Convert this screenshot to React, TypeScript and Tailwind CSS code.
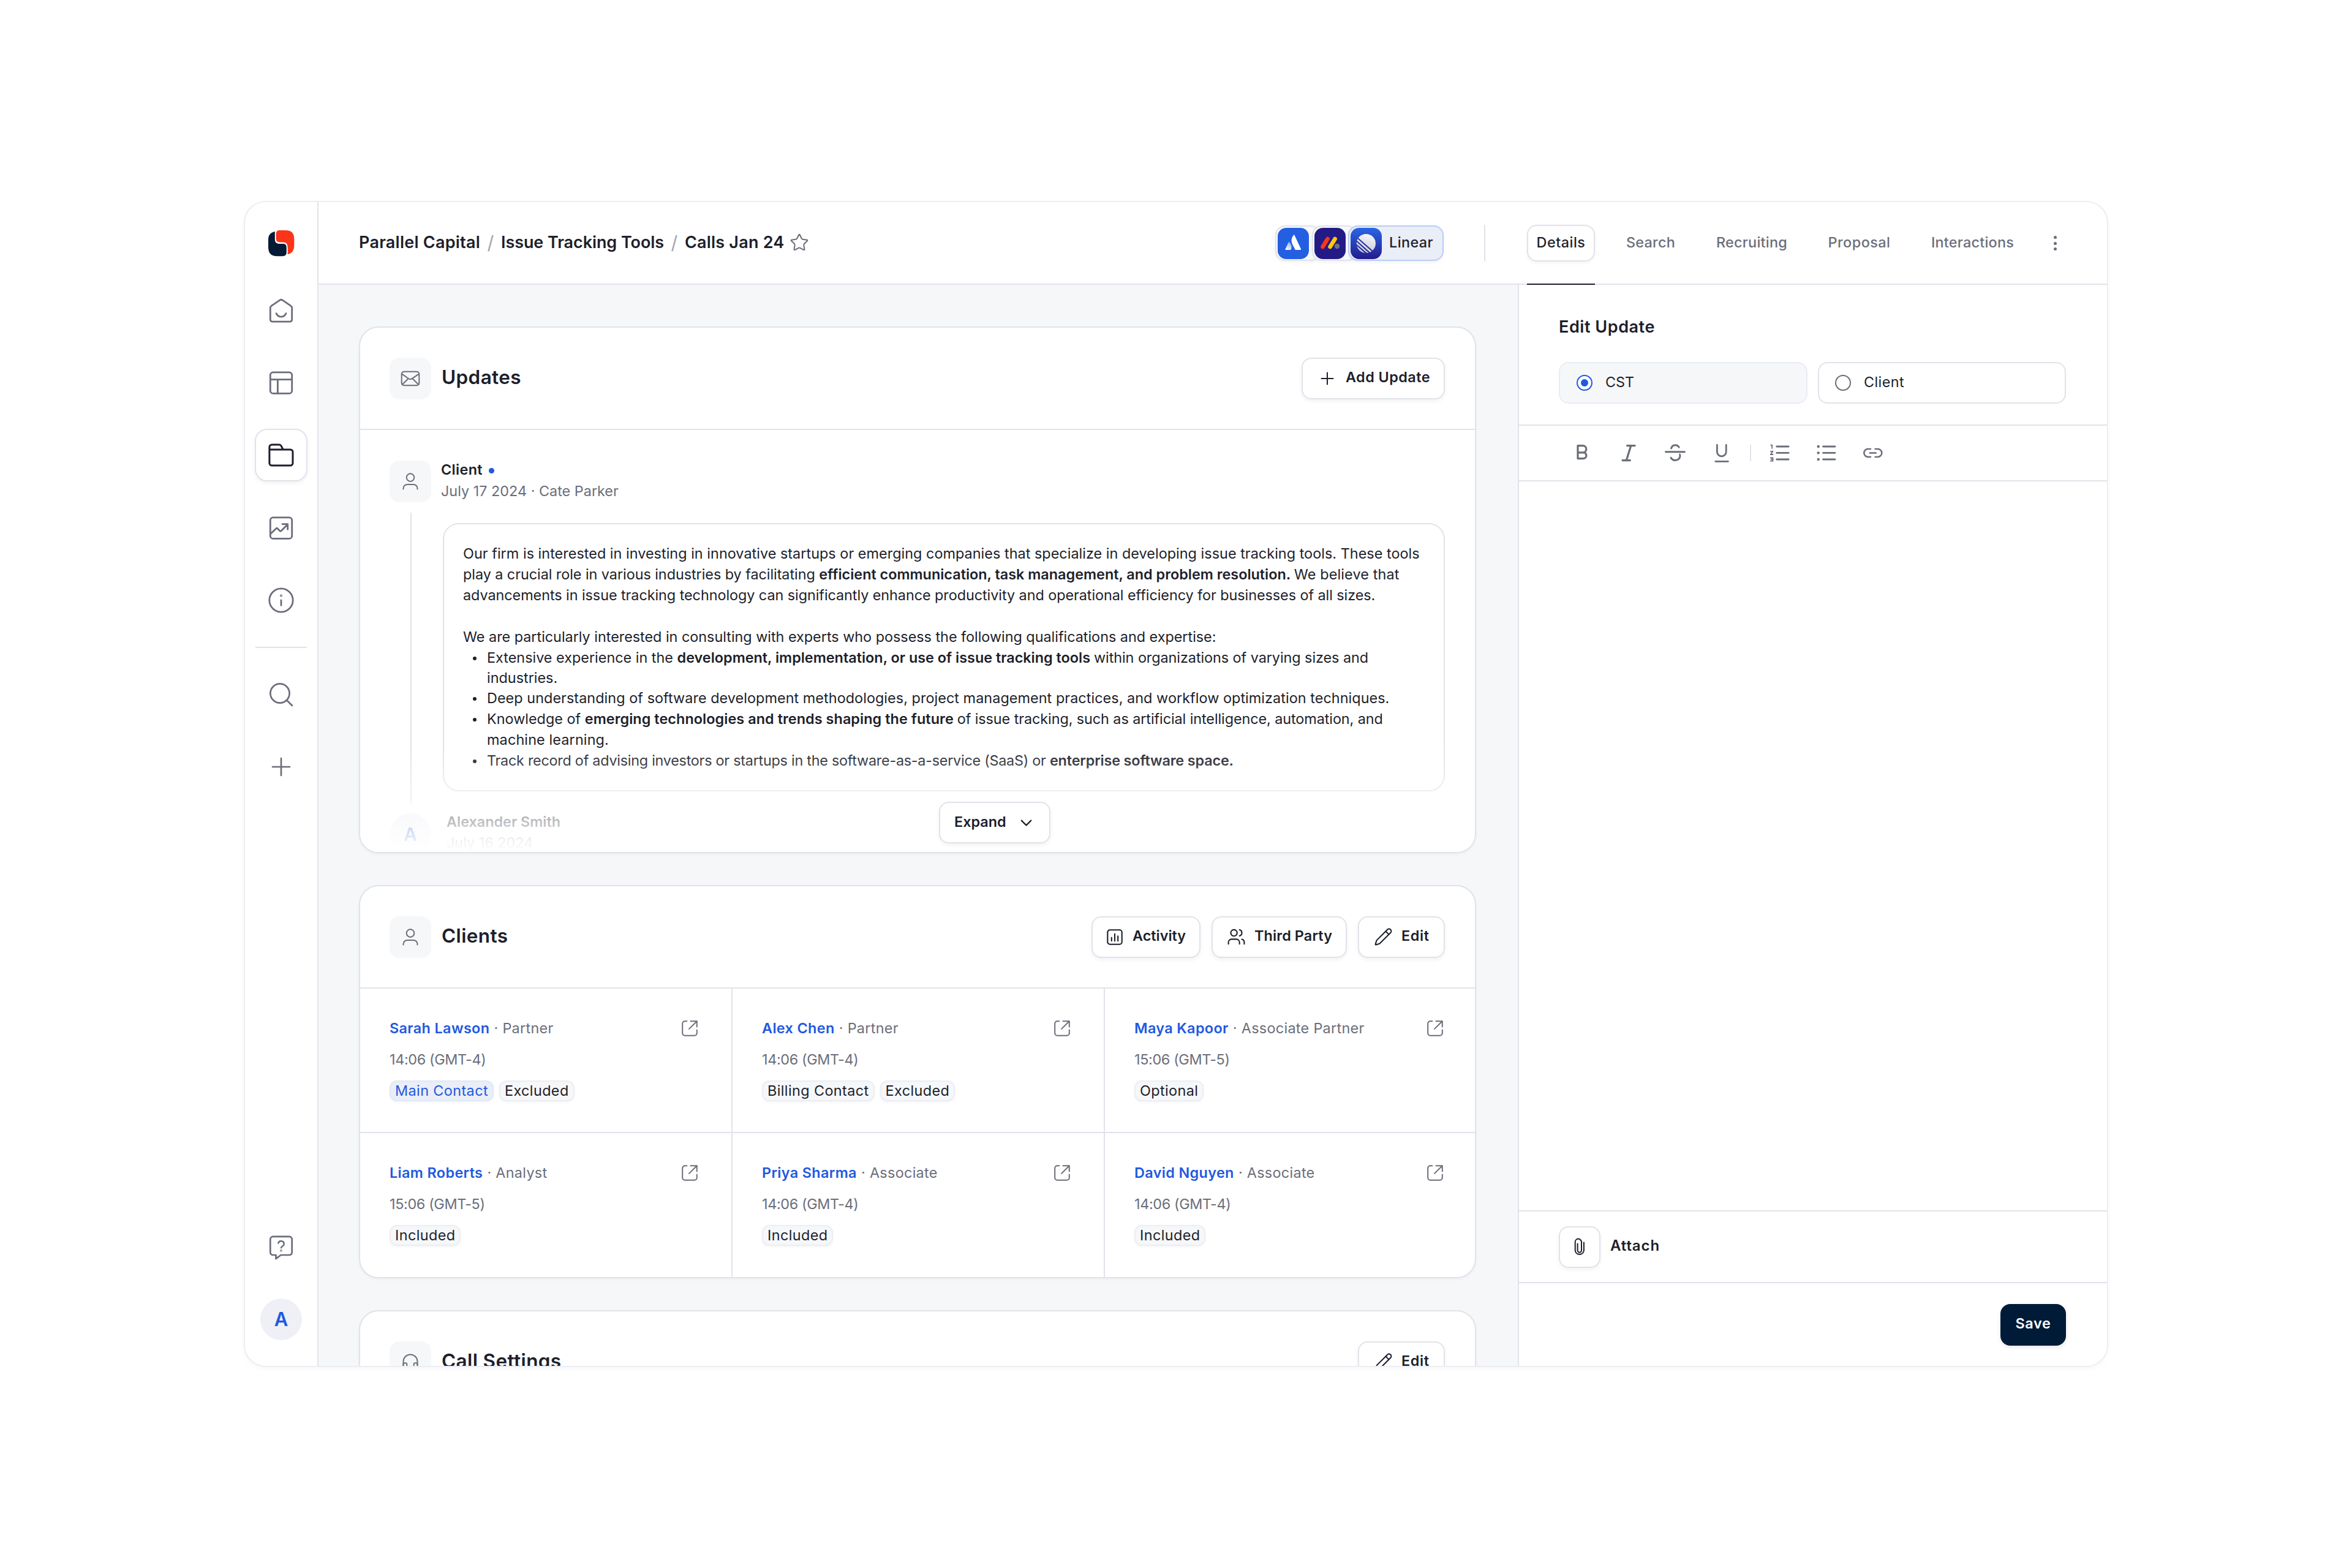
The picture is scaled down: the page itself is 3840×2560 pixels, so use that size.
import React from "react";
import { Pencil, Users, ChevronDown, Star } from "lucide-react";

const semi = "font-semibold text-[#1d1f2b]";
const base = "text-[23.4px]";
const lift = "shadow-[0_3px_6px_rgba(30,34,60,0.06)]";

function T({ className = "", children }: { className?: string; children: React.ReactNode }) {
  return <span className={"whitespace-pre " + className}>{children}</span>;
}

function Icon({ size, sw = 2, className = "", children }: { size: number; sw?: number; className?: string; children: React.ReactNode }) {
  return (
    <svg width={size} height={size} viewBox={`0 0 ${size} ${size}`} fill="none" stroke="currentColor" strokeWidth={sw} strokeLinecap="round" strokeLinejoin="round" className={"shrink-0 " + className}>
      {children}
    </svg>
  );
}

const HomeIcon = () => (
  <Icon size={44} sw={2.8}>
    <path d="M4.3 36.7V17.4c0-1.3.7-2.4 1.8-3L20.4 4.7a3.2 3.2 0 0 1 3.2 0l14.3 9.7c1.1.6 1.8 1.7 1.8 3v19.3a3.5 3.5 0 0 1-3.5 3.5H7.8a3.5 3.5 0 0 1-3.5-3.5z" />
    <path d="M14 26.6c1.7 3.6 4.6 5.6 8 5.6s6.3-2 8-5.6" />
  </Icon>
);
const LayoutIcon = () => (
  <Icon size={44} sw={2.8}>
    <rect x="4.3" y="4.8" width="35.4" height="34.6" rx="4.5" />
    <path d="M4.3 16.6h35.4M16.4 16.6v22.8" />
  </Icon>
);
const FolderIcon = () => (
  <Icon size={44} sw={3}>
    <path d="M2.9 12.9v22.2a4 4 0 0 0 4 4H37a4 4 0 0 0 4-4V16.9a4 4 0 0 0-4-4H2.9V9a4 4 0 0 1 4-4h11.7c1.4 0 2.7.7 3.4 1.9l3.2 6" />
  </Icon>
);
const ChartIcon = () => (
  <Icon size={44} sw={2.8}>
    <rect x="4.3" y="4.8" width="35.4" height="34.6" rx="4.5" />
    <path d="M4.8 31.4l9.2-8.7c.6-.6 1.3-.6 1.9 0l4 4.1c.6.6 1.3.6 1.9.1l10.4-10.5M24 15.7h8.7v8.6" />
  </Icon>
);
const InfoIcon = () => (
  <Icon size={44} sw={2.8}>
    <circle cx="22" cy="22" r="19.2" />
    <path d="M22 22v8.2" />
    <circle cx="22" cy="14.6" r="0.6" />
  </Icon>
);
const SearchIcon = () => (
  <Icon size={44} sw={2.7}>
    <circle cx="20" cy="20" r="15.6" />
    <path d="M31.2 31.2l8.8 8.8" />
  </Icon>
);
const PlusIcon = () => (
  <Icon size={44} sw={2.7}>
    <path d="M22 8v28M8 22h28" />
  </Icon>
);
const HelpIcon = () => (
  <Icon size={44} sw={2.7}>
    <path d="M8.8 3.8h26.4a4.500 4.500 0 0 1 4.500 4.500v21.200a4.500 4.500 0 0 1-4.500 4.500H21.600l-8.100 6.100V34H8.800a4.500 4.500 0 0 1-4.500-4.500V8.300a4.500 4.500 0 0 1 4.500-4.500z" />
    <path d="M17.300 14.600a4.800 4.800 0 0 1 9.400 1.400c0 3.200-4.700 3.900-4.700 6.200" strokeWidth="2.500" />
    <circle cx="22" cy="26.800" r="0.500" />
  </Icon>
);
const MailIcon = () => (
  <Icon size={34} sw={2}>
    <rect x="2.700" y="5.700" width="28.600" height="22.600" rx="4" />
    <path d="M3.200 9.600l11 7.600a5 5 0 0 0 5.600 0l11-7.600M3.800 26.800l9.600-9.600M30.200 26.800l-9.600-9.600" />
  </Icon>
);
const PersonIcon = () => (
  <Icon size={32} sw={2}>
    <circle cx="16" cy="9.600" r="6.300" />
    <path d="M4.500 28.600v-1.200a6.500 6.500 0 0 1 6.500-6.500h10a6.500 6.500 0 0 1 6.500 6.500v1.200" />
  </Icon>
);
const HeadphonesIcon = () => (
  <Icon size={32} sw={2}>
    <path d="M4.500 22.500v-7.600a11.500 11.500 0 0 1 23 0v7.600" />
    <rect x="4.500" y="17.200" width="5.800" height="10.600" rx="2.400" />
    <rect x="21.700" y="17.200" width="5.800" height="10.600" rx="2.400" />
  </Icon>
);
const ExternalIcon = () => (
  <Icon size={28} sw={2} className="text-[#6b6e7a]">
    <path d="M9.400 2.200H6.200a4 4 0 0 0-4 4v15.600a4 4 0 0 0 4 4h15.600a4 4 0 0 0 4-4v-5.200M15.500 2.200h10.300v9.200M25.800 2.200L13 14.900" />
  </Icon>
);
const ActivityIcon = () => (
  <Icon size={28} sw={2.1}>
    <rect x="2.300" y="2.300" width="23.400" height="23.400" rx="3.800" />
    <path d="M8.800 14.800v5.400M14 8.800v11.400M19.200 12.400v7.800" />
  </Icon>
);
const ClipIcon = () => (
  <Icon size={30} sw={2}>
    <path d="M11.600 9.400v11.200a3 3 0 0 0 6.400 0V7a5.400 5.400 0 0 0-5.400-5.400A5.200 5.200 0 0 0 7.700 7v13.900a7.200 7.200 0 0 0 14.200 0V7.400" />
  </Icon>
);

const Logo = () => (
  <svg width="43" height="43" viewBox="0 0 43 43" className="shrink-0">
    <path fill="#fa3519" d="M12.700 5.500C12.700 2 15 0 18.500 0H28c10 0 14.300 4.500 14.300 14v10c0 9-3.300 13.500-10.600 15.300V29c0-6.500-2.200-9.600-7.700-9.600h-5c-4 0-6.300-1.900-6.300-5.400z" />
    <path fill="#061a35" d="M10.800 1.900C3.500 3.500 0 7.500 0 15.500V27c0 10.500 4.500 15.200 14.500 15.200h9c4 0 6.300-2.200 6.300-6.200v-7.500c0-4.500-1.800-6.500-5.800-6.500h-5.500c-5 0-7.700-2.500-7.700-7z" />
  </svg>
);

const AtlassianMark = () => (
  <svg width="51" height="51" viewBox="0 0 51 51" className="shrink-0">
    <defs>
      <linearGradient id="leg" x1="0.7" y1="0" x2="0.2" y2="1"><stop offset="0" stopColor="#8fb0f2" /><stop offset="1" stopColor="#fff" /></linearGradient>
    </defs>
    <rect width="51" height="51" rx="14" fill="#245fe2" />
    <path fill="#fff" d="M26.200 11.600c-4 5-4.600 10.300-2 15.600l4.200 8c.3.600.7.900 1.400.900h7.300c.900 0 1.300-.7.900-1.500L27.400 11.800c-.3-.6-.8-.7-1.200-.2z" />
    <path fill="url(#leg)" d="M18.900 23.200c-.4-.5-.9-.4-1.200.2L12.600 34.600c-.4.8 0 1.500.9 1.500h7.100c.6 0 1.100-.3 1.300-.8 1.600-3.400.6-8.500-3-12.100z" />
  </svg>
);
const MondayMark = () => (
  <svg width="51" height="51" viewBox="0 0 51 51" strokeWidth="6.6" strokeLinecap="round" className="shrink-0">
    <rect width="51" height="51" rx="14" fill="#241a86" />
    <path stroke="#fa3519" d="M13.500 31l8-13" />
    <path stroke="#fccb0a" d="M25.600 31l8-13" />
    <circle cx="37" cy="30" r="4.200" fill="#6f7284" />
  </svg>
);
const LinearMark = () => (
  <svg width="51" height="51" viewBox="0 0 51 51" className="shrink-0">
    <defs>
      <linearGradient id="lbg" x1="0" y1="0" x2="0" y2="1"><stop offset="0" stopColor="#2a66e6" /><stop offset="1" stopColor="#241b8b" /></linearGradient>
      <linearGradient id="ball" x1="0.6" y1="0" x2="0.4" y2="1"><stop offset="0" stopColor="#f5f6fa" /><stop offset="1" stopColor="#c6cad9" /></linearGradient>
      <clipPath id="ballclip"><circle cx="25.300" cy="25.500" r="15.800" /></clipPath>
    </defs>
    <rect width="51" height="51" rx="14" fill="url(#lbg)" />
    <circle cx="25.300" cy="25.500" r="15.600" fill="url(#ball)" />
    <g clipPath="url(#ballclip)" stroke="#2a2f9f" strokeWidth="2.100">
      <path d="M9.300 14.700L38.300 40.200M6 18.100l30 27M5 23.600l26 22.500" />
    </g>
  </svg>
);

function NavItem({ active, children }: { active?: boolean; children: React.ReactNode }) {
  return (
    <div className={"flex size-[86px] items-center justify-center rounded-[20px] " + (active ? "border-2 border-[#e2e3ea] bg-white text-[#1d1f2b] " + lift : "text-[#6b6e7a]")}>
      {children}
    </div>
  );
}

function Sidebar() {
  return (
    <aside className="flex w-[120px] shrink-0 flex-col items-center border-r-2 border-[#e2e3ea] pt-[46px] pb-[42px]">
      <Logo />
      <nav className="mt-[44.5px] flex flex-col gap-[32.4px]">
        <NavItem><HomeIcon /></NavItem>
        <NavItem><LayoutIcon /></NavItem>
        <NavItem active><FolderIcon /></NavItem>
        <NavItem><ChartIcon /></NavItem>
        <NavItem><InfoIcon /></NavItem>
      </nav>
      <div className="my-[33px] h-[2px] w-[84px] bg-[#e2e3ea]" />
      <div className="flex flex-col gap-8">
        <NavItem><SearchIcon /></NavItem>
        <NavItem><PlusIcon /></NavItem>
      </div>
      <div className="mt-auto flex flex-col items-center gap-10">
        <NavItem><HelpIcon /></NavItem>
        <div className="flex size-[68px] items-center justify-center rounded-full bg-[#eef0f6] text-[31px] font-semibold text-[#2159e0]">A</div>
      </div>
    </aside>
  );
}

const tabs = [
  { label: "Search", box: "w-[112px] tracking-[0.24px]" },
  { label: "Recruiting", box: "w-[148px] tracking-[0.25px]" },
  { label: "Proposal", box: "w-[133px] tracking-[0.49px]" },
  { label: "Interactions", box: "w-[167px] tracking-[0.23px]" },
];

const chip = "flex items-center rounded-[16px] border-2 pl-[2px] shadow-[0_2px_5px_rgba(30,34,60,0.06)] ";

function Header() {
  return (
    <header className="flex h-[135px] items-stretch border-b-2 border-[#e2e3ea] pt-px">
      <div className="flex w-[1905px] items-center pl-[66px] text-[27px]">
        <div className="flex items-center pb-[2px]">
          <T className={"tracking-[0.24px] " + semi}>Parallel Capital</T>
          <span className="w-[34px] text-center text-[30px] text-[#a3a5b0]">/</span>
          <T className={"tracking-[-0.08px] " + semi}>Issue Tracking Tools</T>
          <span className="w-[34px] text-center text-[30px] text-[#a3a5b0]">/</span>
          <T className={"tracking-[0.2px] " + semi}>Calls Jan 24</T>
          <Star size={32} strokeWidth={1.5} className="ml-[9px] text-[#6b6e7a]" />
        </div>
        <div className={"mr-[66px] ml-auto flex h-[58px] " + base}>
          <div className={chip + "w-[74px] border-[#e2e3ea] bg-[#f8f9fb]"}><AtlassianMark /></div>
          <div className={chip + "-ml-[14px] w-[74px] border-[#e2e3ea] bg-[#f8f9fb]"}><MondayMark /></div>
          <div className={chip + "-ml-[15px] w-[156px] border-[#b9cdf6] bg-[#eaeef7]"}>
            <LinearMark />
            <T className="ml-[12px] pb-[2px] font-medium tracking-[0.42px] text-[#1d1f2b]">Linear</T>
          </div>
        </div>
        <div className="h-[60px] w-[2px] bg-[#e2e3ea]" />
      </div>
      <div className={"flex flex-1 items-center gap-[35px] pl-[68px] font-medium " + base}>
        <div className="relative flex h-[60px] w-[111px] items-center justify-center rounded-[16px] border-2 border-[#e2e3ea] pb-[3px] tracking-[0.52px] text-[#1d1f2b] shadow-[0_2px_5px_rgba(30,34,60,0.06)]">
          <T>Details</T>
          <div className="absolute top-[94px] -left-[2px] h-[2px] w-[111px] bg-[#1d1f2b]" />
        </div>
        {tabs.map((t) => (
          <div key={t.label} className={"flex justify-center pb-[3px] text-[#6b6e7a] " + t.box}>
            <T>{t.label}</T>
          </div>
        ))}
        <div className="ml-[14px] flex flex-col gap-[4.5px]">
          <i className="size-[5px] rounded-full bg-[#6b6e7a]" />
          <i className="size-[5px] rounded-full bg-[#6b6e7a]" />
          <i className="size-[5px] rounded-full bg-[#6b6e7a]" />
        </div>
      </div>
    </header>
  );
}

function Btn({ className = "", icon, label }: { className?: string; icon: React.ReactNode; label: string }) {
  return (
    <button className={"flex h-[68px] items-center rounded-[16px] border-2 border-[#e2e3ea] bg-white " + base + " " + lift + " " + semi + " " + className}>
      {icon}
      <T className="pb-[3px]">{label}</T>
    </button>
  );
}

function CardHeader({ icon, title, children }: { icon: React.ReactNode; title: string; children: React.ReactNode }) {
  return (
    <div className="flex h-[167px] shrink-0 items-center border-b-2 border-[#e2e3ea] pr-[49px] pl-12">
      <div className="flex size-[68px] items-center justify-center rounded-[16px] bg-[#f6f7f9] text-[#6b6e7a]">{icon}</div>
      <T className={"ml-[17px] pb-[3px] text-[31.5px] tracking-[0.38px] " + semi}>{title}</T>
      <div className="ml-auto flex gap-[18px]">{children}</div>
    </div>
  );
}

const card = "flex flex-col overflow-hidden rounded-[32px] border-2 border-[#e2e3ea] bg-white shadow-[0_2px_4px_rgba(30,34,60,0.04)] ";

const EditBtn = () => <Btn className="w-[142px] gap-[14px] pl-[24px] tracking-[0.6px]" icon={<Pencil size={31} strokeWidth={1.6} />} label="Edit" />;

function Bullet({ children }: { children: React.ReactNode }) {
  return (
    <li className="flex">
      <span className="mt-[15px] mr-[17px] ml-[16px] size-[6px] shrink-0 rounded-full bg-[#1d1f2b]" />
      <div className="flex flex-col">{children}</div>
    </li>
  );
}

function Updates() {
  return (
    <section className={card + "relative h-[860px]"}>
      <CardHeader icon={<MailIcon />} title="Updates">
        <Btn className="w-[234px] gap-[14px] pl-[24px] tracking-[0.45px]" icon={<Icon size={32}><path d="M16 6.500v19M6.500 16h19" /></Icon>} label="Add Update" />
      </CardHeader>
      <div className="flex pt-[50px] pr-[49px] pl-12">
        <div className="flex w-[68px] shrink-0 flex-col items-center">
          <div className="flex size-[68px] items-center justify-center rounded-[16px] bg-[#f6f7f9] text-[#6b6e7a]"><PersonIcon /></div>
          <div className="my-[17px] ml-[2px] h-[474px] w-[2px] bg-[#e2e3ea]" />
          <div className="flex size-[68px] items-center justify-center rounded-full bg-[#eef0f6] text-[30px] font-semibold text-[#2159e0]">A</div>
        </div>
        <div className={"ml-4 flex flex-1 flex-col leading-[34px] " + base}>
          <div className="-mt-[2px] flex items-center">
            <T className={"tracking-[0.35px] " + semi}>Client</T>
            <span className="mt-[2px] ml-[10px] size-[9px] rounded-full bg-[#2159e0]" />
          </div>
          <T className="mt-px text-[#6b6e7a]">July 17 2024 · Cate Parker</T>
          <div className="mt-[35px] ml-[3px] flex h-[438px] flex-col rounded-[26px] border-2 border-[#e2e3ea] pt-[31px] pl-[31px] text-[#1d1f2b]">
            <T className="tracking-[0.03px]">Our firm is interested in investing in innovative startups or emerging companies that specialize in developing issue tracking tools. These tools</T>
            <T><span className="tracking-[-0.05px]">play a crucial role in various industries by facilitating </span><b className="font-semibold">efficient communication, task management, and problem resolution. </b><span className="tracking-[0.15px]">We believe that</span></T>
            <T className="tracking-[-0.06px]">advancements in issue tracking technology can significantly enhance productivity and operational efficiency for businesses of all sizes.</T>
            <T className="mt-[34px] tracking-[-0.02px]">We are particularly interested in consulting with experts who possess the following qualifications and expertise:</T>
            <ul>
              <Bullet>
                <T>Extensive experience in the <b className="font-semibold">development, implementation, or use of issue tracking tools </b><span className="tracking-[-0.06px]">within organizations of varying sizes and</span></T>
                <T className="leading-[32px]">industries.</T>
              </Bullet>
              <Bullet><T className="tracking-[0.05px]">Deep understanding of software development methodologies, project management practices, and workflow optimization techniques.</T></Bullet>
              <Bullet>
                <T>Knowledge of <b className="font-semibold tracking-[0.06px]">emerging technologies and trends shaping the future </b><span className="tracking-[-0.08px]">of issue tracking, such as artificial intelligence, automation, and</span></T>
                <T className="tracking-[0.13px]">machine learning.</T>
              </Bullet>
              <Bullet><T className="tracking-[-0.26px]">Track record of advising investors or startups in the software-as-a-service (SaaS) or <b className="font-semibold tracking-[-0.15px]">enterprise software space.</b></T></Bullet>
            </ul>
          </div>
          <div className="mt-[33px] ml-[9px] flex flex-col">
            <T className={semi}>Alexander Smith</T>
            <T className="text-[#6b6e7a]">July 16 2024</T>
          </div>
        </div>
      </div>
      <div className="absolute inset-x-0 bottom-0 flex h-[171px] items-end justify-center bg-linear-to-b from-white/0 to-white pb-[14px] pl-[252px]">
        <Btn className="w-[182px] flex-row-reverse justify-end gap-[17px] pl-[23px]" icon={<ChevronDown size={31} strokeWidth={1.7} />} label="Expand" />
      </div>
    </section>
  );
}

const people = [
  { name: "Sarah Lawson", role: "Partner", time: "14:06 (GMT-4)", tags: ["Main Contact", "Excluded"] },
  { name: "Alex Chen", role: "Partner", time: "14:06 (GMT-4)", tags: ["Billing Contact", "Excluded"] },
  { name: "Maya Kapoor", role: "Associate Partner", time: "15:06 (GMT-5)", tags: ["Optional"] },
  { name: "Liam Roberts", role: "Analyst", time: "15:06 (GMT-5)", tags: ["Included"] },
  { name: "Priya Sharma", role: "Associate", time: "14:06 (GMT-4)", tags: ["Included"] },
  { name: "David Nguyen", role: "Associate", time: "14:06 (GMT-4)", tags: ["Included"] },
];

function Clients() {
  return (
    <section className={card + "h-[642px]"}>
      <CardHeader icon={<PersonIcon />} title="Clients">
        <Btn className="w-[178px] gap-[15px] pl-[22px]" icon={<ActivityIcon />} label="Activity" />
        <Btn className="w-[221px] gap-[14px] pl-[23px] tracking-[0.12px]" icon={<Users size={31} strokeWidth={1.6} />} label="Third Party" />
        <EditBtn />
      </CardHeader>
      <div className={"grid flex-1 grid-cols-[608px_608px_604px] grid-rows-[236px_235px] leading-[34px] " + base}>
        {people.map((p, i) => (
          <div key={p.name} className={"flex flex-col gap-[17px] border-[#e2e3ea] pt-[48px] pl-12 " + (i % 3 < 2 ? "border-r-2 pr-[54px] " : "pr-[51px] ") + (i < 3 ? "border-b-2" : "")}>
            <div className="flex items-center justify-between">
              <div className="flex text-[#6b6e7a]">
                <T className="font-semibold tracking-[0.36px] text-[#2159e0]">{p.name}</T>
                <span className="w-[21px] text-center">·</span>
                <T className="tracking-[0.3px]">{p.role}</T>
              </div>
              <ExternalIcon />
            </div>
            <T className="tracking-[-0.36px] text-[#6b6e7a]">{p.time}</T>
            <div className="flex gap-[9px]">
              {p.tags.map((t) => (
                <div key={t} className={"flex h-[34px] items-center rounded-[12px] border-2 px-[7px] shadow-[0_2px_4px_rgba(30,34,60,0.04)] " + (t === "Main Contact" ? "border-[#dfe7f8] bg-[#eaeef7] text-[#2159e0]" : "border-[#eceef4] bg-[#f6f7f9] text-[#1d1f2b]")}>
                  <T className="leading-none tracking-[0.4px]">{t}</T>
                </div>
              ))}
            </div>
          </div>
        ))}
      </div>
    </section>
  );
}

function Toolbar() {
  return (
    <div className="flex h-[91px] items-center border-b-2 border-[#e2e3ea] pl-[85px] text-[#6b6e7a]">
      <Icon size={36} sw={3.2}><path d="M11 5.600h8.200a5.600 5.600 0 0 1 0 11.200H11zM11 16.800h9a4.900 4.900 0 0 1 0 9.800h-9z" /></Icon>
      <Icon size={36} sw={3.2} className="ml-10"><path d="M15.500 5.600h12.600M8 29.600h12.400M21.500 6.500l-7 22.500" /></Icon>
      <Icon size={36} sw={2.9} className="ml-10"><path d="M2.500 15.700h31M11.500 10c1-3.300 3.500-5.300 6.500-5.300 2.800 0 5 1.200 6.200 3.500M11 25.300c1.500 2.800 4 4.200 7 4.200 4.800 0 8-3.200 8-7.200 0-.9-.2-1.500-.5-2.200" /></Icon>
      <Icon size={36} sw={2.8} className="ml-10"><path d="M10.400 4.400v11.200a7.400 7.400 0 0 0 14.800 0V4.400M7.800 31.300h20.600" /></Icon>
      <div className="ml-[28px] h-[27px] w-[2px] bg-[#e2e3ea]" />
      <Icon size={36} sw={2.8} className="ml-[29px]">
        <path d="M12.700 7h19.400M12.700 17.400h19.400M12.700 28h19.400" />
        <path strokeWidth="1.8" d="M3.200 4.600h1.900v5.200M2.800 14.800h3.700l-3.700 5.200h3.700M2.800 25.500h3.700v5.200H2.800M3.800 28.100h2.700" />
      </Icon>
      <Icon size={36} sw={2.8} className="ml-10">
        <path d="M12.500 7h19.400M12.500 17.400h19.400M12.500 28h19.400" />
        <path strokeWidth="4.4" d="M4.700 7h0M4.700 17.400h0M4.700 28h0" />
      </Icon>
      <Icon size={36} sw={2.5} className="ml-10"><path d="M14 10.900H9.800a6.500 6.500 0 0 0 0 13H14M21.600 10.900h4.200a6.500 6.500 0 0 1 0 13h-4.200M12.800 17.400h10" /></Icon>
    </div>
  );
}

function Panel() {
  return (
    <aside className="flex w-[962px] shrink-0 flex-col border-l-2 border-[#e2e3ea] bg-white">
      <div className="flex h-[230px] flex-col border-b-2 border-[#e2e3ea] pt-[53px] pr-[67px] pl-[65px]">
        <T className={"text-[27px] leading-[32px] tracking-[0.55px] " + semi}>Edit Update</T>
        <div className={"mt-[41px] flex gap-[17px] text-[#1d1f2b] " + base}>
          <label className="flex h-[68px] flex-1 items-center gap-[21px] rounded-[16px] border-2 border-[#eaecf4] bg-[#f6f7f9] pl-[27px]">
            <span className="flex size-[26px] items-center justify-center rounded-full border-2 border-[#2159e0] bg-white"><i className="size-[12px] rounded-full bg-[#2159e0]" /></span>
            <T className="pb-[2px]">CST</T>
          </label>
          <label className="flex h-[68px] flex-1 items-center gap-[21px] rounded-[16px] border-2 border-[#e2e3ea] pl-[26px]">
            <span className="size-[26px] rounded-full border-2 border-[#6b6e7a]" />
            <T className="pb-[2px] tracking-[0.41px]">Client</T>
          </label>
        </div>
      </div>
      <Toolbar />
      <div className="flex-1" />
      <div className="flex h-[117px] items-center border-t-2 border-[#e2e3ea] pl-[65px]">
        <div className={"flex size-[68px] items-center justify-center rounded-[16px] border-2 border-[#e2e3ea] text-[#1d1f2b] " + lift}><ClipIcon /></div>
        <T className={"ml-[16px] pb-[3px] text-[24px] tracking-[0.89px] " + semi}>Attach</T>
      </div>
      <div className="flex h-[137px] items-center justify-end border-t-2 border-[#e2e3ea] pr-[67px]">
        <button className={"flex h-[68px] w-[107px] items-center justify-center rounded-[16px] bg-[#001b38] pb-[3px] font-semibold tracking-[0.65px] text-white shadow-[0_3px_6px_rgba(30,34,60,0.1)] " + base}>Save</button>
      </div>
    </aside>
  );
}

export default function App() {
  return (
    <div className="h-[2560px] w-[3840px] overflow-hidden bg-white pt-[328px] pl-[398px] font-['Inter',sans-serif]">
      <div className="flex h-[1904px] w-[3044px] overflow-hidden rounded-[36px] border-2 border-[#eceef4] bg-white shadow-[0_3px_10px_rgba(30,34,60,0.03)]">
        <Sidebar />
        <div className="flex flex-1 flex-col">
          <Header />
          <div className="flex min-h-0 flex-1">
            <main className="flex flex-1 flex-col gap-[52px] overflow-hidden bg-[#f6f7f9] pt-[68px] pr-[68px] pl-[66px] [&>*]:shrink-0">
              <Updates />
              <Clients />
              <section className={card + "h-[400px]"}>
                <CardHeader icon={<HeadphonesIcon />} title="Call Settings"><EditBtn /></CardHeader>
              </section>
            </main>
            <Panel />
          </div>
        </div>
      </div>
    </div>
  );
}
